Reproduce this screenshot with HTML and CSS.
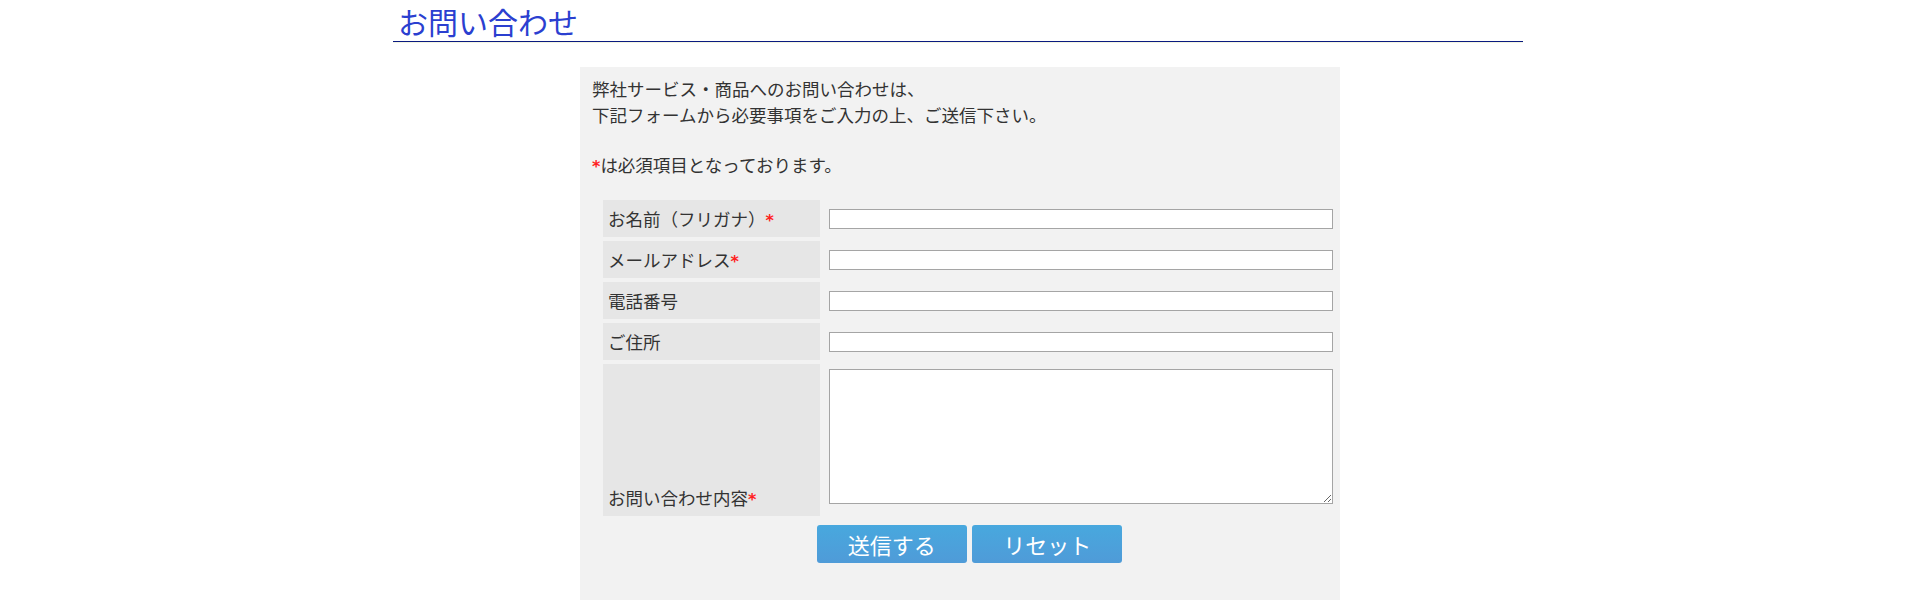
FILE: index.html
```html
<!DOCTYPE html>
<html lang="ja">
<head>
  <meta charset="utf-8">
  <title>お問い合わせ</title>
  <link rel="stylesheet" href="styles.css">
</head>
<body>

  <!--HEADING-->
  <h1 class="page-title">お問い合わせ</h1>

  <!--FORM BOX-->
  <div class="contact-box">
    <p class="lead">
      弊社サービス・商品へのお問い合わせは、<br>
      下記フォームから必要事項をご入力の上、ご送信下さい。
    </p>
    <p class="lead note"><span class="req">*</span>は必須項目となっております。</p>

    <form>
      <table class="contact-table">
        <tr>
          <th>お名前（フリガナ）<span class="req">*</span></th>
          <td><input type="text" class="field"></td>
        </tr>
        <tr>
          <th>メールアドレス<span class="req">*</span></th>
          <td><input type="text" class="field"></td>
        </tr>
        <tr>
          <th>電話番号</th>
          <td><input type="text" class="field"></td>
        </tr>
        <tr>
          <th>ご住所</th>
          <td><input type="text" class="field"></td>
        </tr>
        <tr class="message-row">
          <th>お問い合わせ内容<span class="req">*</span></th>
          <td><textarea class="field message"></textarea></td>
        </tr>
        <tr>
          <td colspan="2" class="buttons">
            <button type="submit" class="btn">送信する</button>
            <button type="reset" class="btn">リセット</button>
          </td>
        </tr>
      </table>
    </form>
  </div>

</body>
</html>
```

FILE: styles.css
```css
body {
  margin: 0;
  background-color: #ffffff;
  color: #333333;
  font-family: "Noto Sans CJK JP", "Noto Sans", sans-serif;
}
/* Page heading with rule */
.page-title {
  width: 1130px;
  margin: 0 0 0 calc(50% - 567px);
  padding: 1px 0 0 5px;
  box-sizing: border-box;
  font-size: 30px;
  font-weight: normal;
  line-height: 40px;
  color: #2b3fd0;
  border-bottom: 1px solid #0a1a80;
  box-shadow: 0 1px 0 #f3f5e2;
}
/* Grey form container */
.contact-box {
  width: 760px;
  margin: 25px auto 0;
  padding: 9px 0 31px 12px;
  box-sizing: border-box;
  background-color: #f2f2f2;
}
.lead {
  margin: 0;
  font-size: 17.5px;
  line-height: 26px;
}
.note {
  margin-top: 24px;
}
.req {
  color: #ff2020;
  font-family: "DejaVu Sans", sans-serif;
  font-weight: bold;
  font-size: 16px;
  line-height: 0;
}
.contact-table {
  margin: 18px 0 0 7px;
  border-spacing: 4px;
}
.contact-table th {
  width: 207px;
  height: 27px;
  padding: 5px 5px;
  background-color: #e6e6e6;
  font-size: 17.5px;
  font-weight: normal;
  line-height: 27px;
  text-align: left;
  vertical-align: bottom;
}
.contact-table td {
  padding: 5px 3px 5px 5px;
  vertical-align: middle;
}
.field {
  display: block;
  width: 504px;
  height: 20px;
  margin: 0;
  padding: 0 3px;
  box-sizing: border-box;
  border: 1px solid #a5a5a5;
  background-color: #ffffff;
  font-family: inherit;
}
.message-row td {
  vertical-align: top;
}
.message {
  height: 135px;
  margin-bottom: 7px;
}
/* Submit and reset buttons */
.contact-table .buttons {
  padding: 5px 0 2px;
  text-align: center;
}
.btn {
  width: 150px;
  height: 38px;
  margin: 0 1px;
  padding: 0;
  border: none;
  border-radius: 3px;
  background: linear-gradient(#48a8de, #4f9bd8);
  color: #ffffff;
  font-family: inherit;
  font-size: 22px;
  cursor: pointer;
}
```
